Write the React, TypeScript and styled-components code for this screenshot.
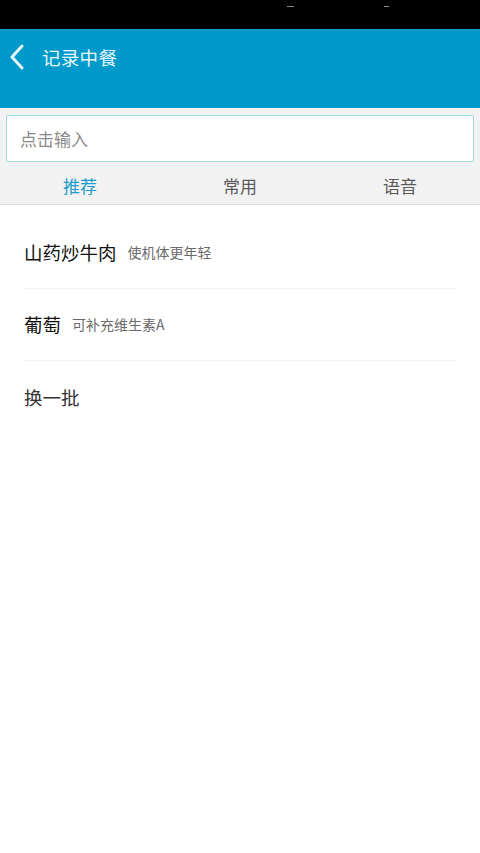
import React from "react";
import styled, { createGlobalStyle } from "styled-components";

const GlobalStyle = createGlobalStyle`
  html, body {
    margin: 0;
    padding: 0;
    background: #ffffff;
  }
  body {
    font-family: "Noto Sans CJK SC", "Noto Sans", sans-serif;
  }
`;

const recommends = [
  { name: "山药炒牛肉", desc: "使机体更年轻" },
  { name: "葡萄", desc: "可补充维生素A" },
];

const tabs = ["推荐", "常用", "语音"];

function App() {
  return (
    <Page>
      <GlobalStyle />
      <StatusBar>
        <StatusDash />
        <StatusDash small />
      </StatusBar>
      <Header>
        <BackButton aria-label="返回">
          <svg width="16" height="26" viewBox="0 0 16 26">
            <path
              d="M13 2 L3 13 L13 24"
              fill="none"
              stroke="#e6f6fb"
              strokeWidth="3"
              strokeLinecap="round"
              strokeLinejoin="round"
            />
          </svg>
        </BackButton>
        <Title>记录中餐</Title>
      </Header>
      <SearchArea>
        <SearchInput placeholder="点击输入" readOnly />
        <Tabs>
          {tabs.map((t, i) => (
            <Tab key={t} active={i === 0}>
              {t}
            </Tab>
          ))}
        </Tabs>
      </SearchArea>
      <List>
        {recommends.map((r) => (
          <Item key={r.name}>
            <ItemName>{r.name}</ItemName>
            <ItemDesc>{r.desc}</ItemDesc>
          </Item>
        ))}
        <Refresh>换一批</Refresh>
      </List>
    </Page>
  );
}
export default App;

const Page = styled.div`
  width: 480px;
  min-height: 853px;
  background: #ffffff;
`;

const StatusBar = styled.div`
  height: 29px;
  background: #000000;
  display: flex;
  align-items: flex-start;
  padding-left: 287px;
  gap: 90px;
  box-sizing: border-box;
`;

const StatusDash = styled.span<{ small?: boolean }>`
  margin-top: 6px;
  width: ${(p) => (p.small ? "5px" : "7px")};
  height: 1px;
  background: #8a8a8a;
`;

const Header = styled.div`
  height: 79px;
  background: #0099cc;
  display: flex;
  align-items: flex-start;
  padding-top: 15px;
  box-sizing: border-box;
`;

const BackButton = styled.div`
  width: 43px;
  height: 26px;
  display: flex;
  align-items: center;
  padding-left: 9px;
  box-sizing: border-box;
`;

const Title = styled.div`
  color: #e9f7fb;
  font-size: 18.5px;
  line-height: 26px;
  letter-spacing: 0.3px;
  margin-left: -1px;
`;

const SearchArea = styled.div`
  background: #f2f2f2;
  padding-top: 7px;
  border-bottom: 1px solid #dcdcdc;
`;

const SearchInput = styled.input`
  display: block;
  margin: 0 6px;
  width: 468px;
  height: 47px;
  box-sizing: border-box;
  border: 1px solid #9fd9ec;
  border-radius: 2px;
  background: #ffffff;
  padding: 0 13px;
  font-family: "Noto Sans CJK SC", "Noto Sans", sans-serif;
  font-size: 17px;
  outline: none;
  &::placeholder {
    color: #8a8a8a;
  }
`;

const Tabs = styled.div`
  display: grid;
  grid-template-columns: repeat(3, 1fr);
  height: 42px;
  align-items: center;
`;

const Tab = styled.div<{ active?: boolean }>`
  text-align: center;
  font-size: 17px;
  color: ${(p) => (p.active ? "#1a9ccc" : "#5a5a5a")};
  padding-top: 4px;
`;

const List = styled.div`
  padding: 12px 23px 0 24px;
`;

const Item = styled.div`
  display: flex;
  align-items: center;
  gap: 11px;
  height: 72px;
  padding-bottom: 2px;
  box-sizing: border-box;
  border-bottom: 1px solid #f4f4f4;
`;

const ItemName = styled.span`
  font-size: 18.5px;
  color: #111111;
`;

const ItemDesc = styled.span`
  font-size: 14px;
  color: #6a6a6a;
`;

const Refresh = styled.div`
  height: 72px;
  display: flex;
  align-items: center;
  font-size: 18.5px;
  color: #333333;
`;
